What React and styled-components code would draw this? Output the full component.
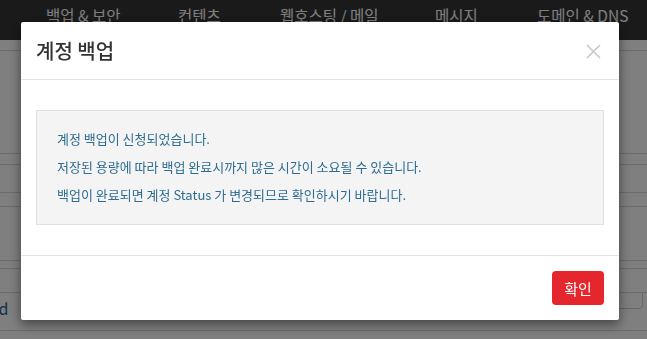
import styled, { createGlobalStyle } from "styled-components";

const GlobalStyle = createGlobalStyle`
  body {
    margin: 0;
    font-family: "Noto Sans CJK KR", "Noto Sans", sans-serif;
    background: #fff;
    overflow: hidden;
  }
`;

const navItems = [
  { label: "백업 & 보안", w: 132 },
  { label: "컨텐츠", w: 102 },
  { label: "웹호스팅 / 메일", w: 155 },
  { label: "메시지", w: 102 },
  { label: "도메인 & DNS", w: 110 },
];
const rowHeights = [10, 102, 10, 27, 13, 53, 7, 23, 37, 30];

export default function App() {
  return (
    <>
      <GlobalStyle />
      <Page>
        <NavBar>
          {navItems.map((item) => (
            <NavItem key={item.label} $w={item.w}>
              {item.label}
            </NavItem>
          ))}
        </NavBar>
        <Table>
          {rowHeights.map((h, i) => (
            <Row key={i} $h={h}>
              {i === 8 && (
                <>
                  <RowText>jd</RowText>
                  <GhostBox />
                </>
              )}
              {i === 9 && (
                <>
                  <Cell $w={60} />
                  <Cell $w={70}>100만 / 0</Cell>
                  <Cell $w={60}>도메인 조회</Cell>
                  <Cell $w={65}>운영중</Cell>
                  <Cell $w={55}>00 GB</Cell>
                  <Cell $w={187}>010 GB / Month</Cell>
                  <Bar>
                    <BarPart $bg="#3c8a3c">10%</BarPart>
                    <BarPart $bg="#222">0%</BarPart>
                    <BarRest>00%</BarRest>
                  </Bar>
                </>
              )}
            </Row>
          ))}
        </Table>
      </Page>

      <Overlay>
        <Modal>
          <ModalHeader>
            <Title>계정 백업</Title>
            <CloseButton aria-label="close">
              <svg width="15" height="15" viewBox="0 0 15 15">
                <path d="M1 1 L14 14 M14 1 L1 14" stroke="#c8c8c8" strokeWidth="1.6" />
              </svg>
            </CloseButton>
          </ModalHeader>
          <ModalBody>
            <InfoBox>
              <p>계정 백업이 신청되었습니다.</p>
              <p>저장된 용량에 따라 백업 완료시까지 많은 시간이 소요될 수 있습니다.</p>
              <p>백업이 완료되면 계정 Status 가 변경되므로 확인하시기 바랍니다.</p>
            </InfoBox>
          </ModalBody>
          <ModalFooter>
            <ConfirmButton>확인</ConfirmButton>
          </ModalFooter>
        </Modal>
      </Overlay>
    </>
  );
}

const Page = styled.div`
  width: 647px;
  height: 339px;
  overflow: hidden;
`;

const NavBar = styled.nav`
  height: 40px;
  background: #353535;
  display: flex;
  align-items: flex-start;
  padding-left: 46px;
`;

const NavItem = styled.span`
  color: #fff;
  font-size: 15.5px;
  line-height: 32px;
  margin-top: -1px;
  width: ${(p) => p.$w}px;
  flex-shrink: 0;
  white-space: nowrap;
`;

const Table = styled.div`
  display: flex;
  flex-direction: column;
`;

const Row = styled.div`
  height: ${(p) => p.$h}px;
  border-bottom: 1px solid #d6d6d6;
  display: flex;
  align-items: center;
  font-size: 13px;
  color: #444;
  position: relative;
  white-space: nowrap;
  overflow: hidden;
`;

const RowText = styled.span`
  color: #2d5f86;
  font-size: 16px;
  margin-left: -6px;
  margin-top: -8px;
`;

const GhostBox = styled.div`
  position: absolute;
  right: 4px;
  top: -14px;
  width: 30px;
  height: 28px;
  border: 1px solid #ccc;
  border-radius: 4px;
`;

const Cell = styled.span`
  width: ${(p) => p.$w}px;
  flex-shrink: 0;
  padding-top: 12px;
`;

const Bar = styled.div`
  display: flex;
  width: 140px;
  height: 20px;
  border: 1px solid #ccc;
  border-radius: 3px;
  overflow: hidden;
  margin-top: 14px;
  font-size: 12px;
`;

const BarPart = styled.span`
  background: ${(p) => p.$bg};
  color: #fff;
  padding: 0 4px;
  line-height: 20px;
`;

const BarRest = styled.span`
  flex: 1;
  text-align: center;
  line-height: 20px;
`;

const Overlay = styled.div`
  position: fixed;
  inset: 0;
  background: rgba(0, 0, 0, 0.5);
  padding-top: 22px;
  padding-left: 21px;
`;

const Modal = styled.div`
  width: 598px;
  background: #fff;
  border-radius: 2px;
  box-shadow: 0 4px 12px rgba(0, 0, 0, 0.5);
`;

const ModalHeader = styled.div`
  height: 57px;
  padding: 0 15px;
  display: flex;
  align-items: center;
  justify-content: space-between;
  border-bottom: 1px solid #e5e5e5;
`;

const Title = styled.h4`
  margin: 0;
  font-size: 20px;
  font-weight: 500;
  color: #333;
  line-height: 1;
`;

const CloseButton = styled.button`
  border: none;
  background: none;
  padding: 0;
  margin-right: 3px;
  margin-top: 2px;
  display: flex;
`;

const ModalBody = styled.div`
  padding: 30px 15px 30px;
`;

const InfoBox = styled.div`
  background: #f4f4f4;
  border: 1px solid #e0e0e0;
  padding: 14px 20px 15px;

  p {
    margin: 0;
    font-size: 13px;
    line-height: 28px;
    color: #2e6d93;
  }
`;

const ModalFooter = styled.div`
  border-top: 1px solid #e5e5e5;
  padding: 15px;
  display: flex;
  justify-content: flex-end;
`;

const ConfirmButton = styled.button`
  background: #e5262c;
  color: #fff;
  border: none;
  border-radius: 4px;
  width: 52px;
  height: 34px;
  font-family: inherit;
  font-size: 15px;
  padding: 0;
`;
